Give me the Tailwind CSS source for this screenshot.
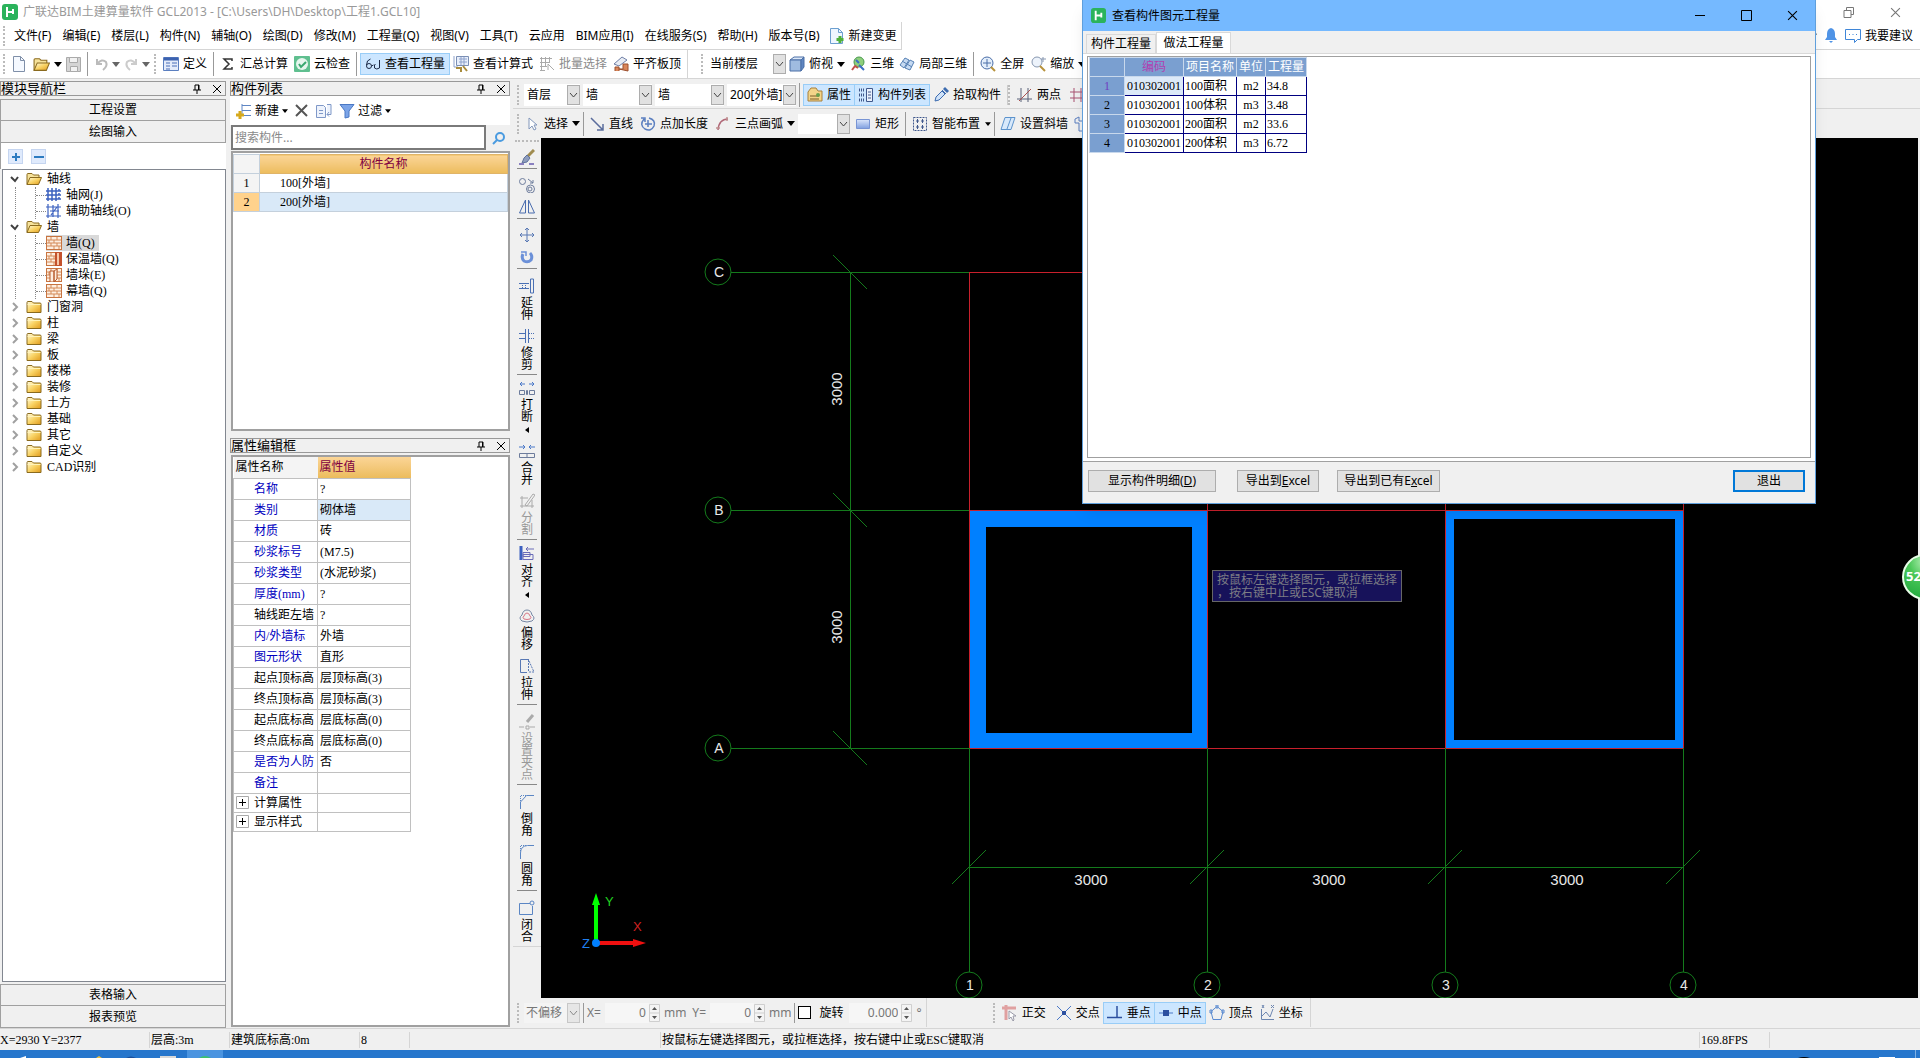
<!DOCTYPE html>
<html lang="zh-CN">
<head>
    <meta charset="UTF-8">
    <meta name="viewport" content="width=device-width, initial-scale=1.0">
    <title>广联达BIM土建算量软件 GCL2013</title>
    <script src="https://cdn.jsdelivr.net/npm/@tailwindcss/browser@4"></script>
</head>
<body class="bg-[#f0f0f0] text-black text-xs font-['Noto_Sans','Noto_Sans_CJK_SC',sans-serif]">

<!-- Shared icons -->
<svg class="absolute size-0">
    <defs>
        <linearGradient id="gold" x1="0" y1="0" x2="1" y2="1"><stop offset="0" stop-color="#fffbe0"/><stop offset=".5" stop-color="#f9d364"/><stop offset="1" stop-color="#e09a1c"/></linearGradient>
        <linearGradient id="blueFill" x1="0" y1="0" x2="0" y2="1"><stop offset="0" stop-color="#dbe6fb"/><stop offset="1" stop-color="#7f9fe0"/></linearGradient>
        <radialGradient id="ball" cx=".5" cy=".15" r=".9"><stop offset="0" stop-color="#b6f0b6"/><stop offset=".4" stop-color="#4cc95a"/><stop offset="1" stop-color="#1fa83c"/></radialGradient>
        <symbol id="logo" viewBox="0 0 16 16"><rect width="16" height="16" rx="3" fill="#2bb35c"/><path d="M5 3v10M5 8h6M11 5v5" stroke="#fff" stroke-width="2" fill="none"/></symbol>
        <symbol id="folder" viewBox="0 0 16 14"><path d="M1 12.500V2.500q0-1 1-1h4l1.500 1.500H14q1 0 1 1v8.500z" fill="url(#gold)" stroke="#8a6a1e"/><path d="M1.500 4.500h13" stroke="#fff3b8"/></symbol>
        <symbol id="folderOpen" viewBox="0 0 16 14"><path d="M1 12.500V2.500q0-1 1-1h4l1.500 1.500H13v3" fill="#f6e29a" stroke="#8a6a1e"/><path d="M1 12.500l3-7h11.500l-3 7z" fill="url(#gold)" stroke="#8a6a1e"/></symbol>
        <symbol id="wall" viewBox="0 0 16 14"><rect x=".5" y=".5" width="15" height="13" fill="#fdeee0" stroke="#c87440"/><path d="M1 4h14M1 7h14M1 10h14M5 1v3M11 1v3M8 4v3M3 4v3M5 7v3M11 7v3M8 10v3M13 10v3" stroke="#d48a58"/></symbol>
        <symbol id="down" viewBox="0 0 8 5"><path d="M0 0h8L4 5z" fill="currentColor"/></symbol>
        <symbol id="chevron" viewBox="0 0 13 20"><rect x=".5" y=".5" width="12" height="19" fill="#e1e1e1" stroke="#adadad"/><path d="M3 8l3.500 4L10 8" fill="none" stroke="#444"/></symbol>
        <symbol id="pin" viewBox="0 0 10 10"><path d="M3 1v5M7 1v5M3 1h4M1 6h8M5 6v4" stroke="#000" fill="none"/><path d="M6 1h1v5H6z"/></symbol>
        <symbol id="cross" viewBox="0 0 10 10"><path d="M1 1l8 8M9 1l-8 8" stroke="currentColor" fill="none"/></symbol>
        <symbol id="spin" viewBox="0 0 11 18"><path d="M.5.500h10v17H.5zM1 9h9" fill="#f4f4f4" stroke="#cfcfcf"/><path d="M3 6h5L5.500 3zM3 12h5l-2.500 3z" fill="#555"/></symbol>
    </defs>
</svg>

<div class="relative flex h-screen flex-col overflow-hidden">

    <!-- Title, menu and main toolbar -->
    <header class="bg-white">
        <div class="flex h-[22px] items-center gap-[5px] pl-[2px] pt-[2px] text-[#999]">
            <svg class="size-4"><use href="#logo"/></svg>
            <span>广联达BIM土建算量软件 GCL2013 - [C:\Users\DH\Desktop\工程1.GCL10]</span>
            <div class="ml-auto flex gap-[36px] pr-[19px]">
                <button aria-label="还原"><svg class="size-[11px]" fill="none" stroke="#777"><path d="M1 3.500h7v7H1zM3.500 3V.5h7v7H8"/></svg></button>
                <button aria-label="关闭"><svg class="size-[11px] text-[#777]"><use href="#cross"/></svg></button>
            </div>
        </div>
        <div class="flex h-[28px] justify-between">
            <nav class="flex items-center gap-[11px] border-r border-b border-[#d5d5d5] pr-1">
                <span class="ml-[3px] h-5 border-l-2 border-dotted border-[#bbb] -mr-[2px]"></span>
                <button>文件(F)</button>
                <button>编辑(E)</button>
                <button>楼层(L)</button>
                <button>构件(N)</button>
                <button>辅轴(O)</button>
                <button>绘图(D)</button>
                <button>修改(M)</button>
                <button>工程量(Q)</button>
                <button>视图(V)</button>
                <button>工具(T)</button>
                <button>云应用</button>
                <button>BIM应用(I)</button>
                <button>在线服务(S)</button>
                <button>帮助(H)</button>
                <button>版本号(B)</button>
                <button class="-ml-[2px] flex items-center gap-1">
                    <svg class="size-4" fill="none"><path d="M1.500.500h8l4 4v11h-12z" fill="#eef6ff" stroke="#6c9fd0"/><path d="M9.500.500v4h4" stroke="#6c9fd0"/><path d="M11 8v7M7.500 11.500h7" stroke="#4fb03c" stroke-width="3"/></svg>
                    新建变更
                </button>
            </nav>
            <div class="flex items-center gap-[8px] border-b border-[#d5d5d5] pr-[7px]">
                <svg class="h-[5px] w-[6px]"><use href="#down"/></svg>
                <button aria-label="消息"><svg class="h-[15px] w-[12px]" fill="#4f93e6"><path d="M6 0q4 1 4 6v3l2 3H0l2-3V6q0-5 4-6zM4 13h4l-2 2z"/></svg></button>
                <button class="flex items-center gap-1">
                    <svg class="size-4" fill="none" stroke="#3f86d8"><path d="M.5 1.500h15v10h-3l-3 3v-3h-9z"/><path d="M4 6.500h1M7.500 6.500h1M11 6.500h1"/></svg>
                    我要建议
                </button>
            </div>
        </div>
        <div class="flex h-[29px] items-center border-b border-[#d5d5d5]">
            <span class="ml-[3px] h-5 border-l-2 border-dotted border-[#bbb]"></span>
            <button class="ml-[6px]" aria-label="新建"><svg class="size-4" fill="none" stroke="#7f8fa8"><path d="M2.500.500h7l4 4v11h-11z" fill="#f5f9ff"/><path d="M9.500.500v4h4"/></svg></button>
            <button class="ml-[6px] flex items-center gap-1" aria-label="打开"><svg class="h-[15px] w-[17px]"><use href="#folderOpen"/></svg><svg class="h-[5px] w-2"><use href="#down"/></svg></button>
            <button class="ml-1" aria-label="保存"><svg class="size-[15px]" fill="#d5d5d5" stroke="#aaa"><path d="M.5.500h14v14H.5z"/><path d="M3.500.500h8v5h-8zM4.500 9.500h7v5h-7z" fill="#f2f2f2"/></svg></button>
            <span class="mx-[6px] h-6 w-px bg-[#999]"></span>
            <button class="flex items-center gap-[2px] text-[#666]" aria-label="撤销"><svg class="size-4" fill="none" stroke="#bbb" stroke-width="2"><path d="M3 3v5h5M3 8q5-6 9-2 2 4-3 8"/></svg><svg class="h-[5px] w-2"><use href="#down"/></svg></button>
            <button class="ml-1 flex items-center gap-[2px] text-[#666]" aria-label="重做"><svg class="size-4" fill="none" stroke="#ccc" stroke-width="2"><path d="M12 3v5H7M12 8Q7 2 3 6q-2 4 3 8"/></svg><svg class="h-[5px] w-2"><use href="#down"/></svg></button>
            <span class="ml-1 h-5 border-l-2 border-dotted border-[#bbb]"></span>
            <button class="ml-1 flex items-center gap-1 px-[3px]"><svg class="size-4" fill="none"><path d="M.5 1.500h15v13H.5z" fill="#e3ebfa" stroke="#5b7fc0"/><path d="M1 3h14" stroke="#3c62b0" stroke-width="3"/><path d="M3 7h4M3 10h4M9 7h5M9 10h5M3 13h4" stroke="#4a6fb8"/></svg>定义</button>
            <span class="mx-[3px] h-6 w-px bg-[#999]"></span>
            <button class="flex items-center gap-1 px-[3px]"><svg class="size-4" fill="none" stroke="#333" stroke-width="1.500"><path d="M12 5V3H4l5 5-5 5h8v-2"/></svg>汇总计算</button>
            <button class="flex items-center gap-1 px-[3px]"><svg class="size-4"><rect width="16" height="16" rx="1" fill="#5fbf8f"/><circle cx="8" cy="8" r="6" fill="#e6f6ee"/><path d="M5 8l2 3 5-5" fill="none" stroke="#3aa870" stroke-width="2"/></svg>云检查</button>
            <span class="mx-[3px] h-6 w-px bg-[#999]"></span>
            <button class="flex h-[22px] items-center gap-1 border border-[#99cdf7] bg-[#cce6ff] px-1"><svg class="size-4" fill="none" stroke="#1d2b48"><circle cx="4" cy="10" r="2.500"/><path d="M1.500 9q0-5 4-6M9.500 9v3q2 2 5 0V4M9.500 9l1-1M6.500 10l2-1"/></svg>查看工程量</button>
            <button class="flex items-center gap-1 px-[3px]"><svg class="size-4" fill="none"><path d="M3.500.500h12v9h-12z" fill="#e8effb" stroke="#7b8fb5"/><path d="M1 0v11h4M6 3h8M6 6h8M8 1v8M11 1v8" stroke="#8ea2cc"/><path d="M3 12h5v4M10 10l4 5" stroke="#a98c3c" stroke-width="2"/></svg>查看计算式</button>
            <button class="flex items-center gap-1 px-[3px] text-[#8a8a8a]" disabled><svg class="size-4" fill="none" stroke="#aaa"><path d="M1 2.500h12M1 6.500h9M1 10.500h7M1 14.500h5M2.500 1v14M6.500 1v10M10.500 1v6M9 8l6 6M9 8v6"/></svg>批量选择</button>
            <button class="flex items-center gap-1 px-[3px]"><svg class="size-4" fill="none"><path d="M1 8l8-7 5 3-8 6z" fill="#e8ecf4" stroke="#6f7fa6"/><path d="M2 15v-4h4v4M6 13h4V8h5v7z" fill="#d9865a" stroke="#9c4e2c"/></svg>平齐板顶</button>
            <span class="ml-[3px] h-full w-px bg-[#d5d5d5]"></span>
            <span class="ml-[13px] h-5 border-l-2 border-dotted border-[#bbb]"></span>
            <label class="ml-[7px] flex items-center">
                <select class="h-5 w-[63px] appearance-none bg-white" aria-label="楼层范围"><option>当前楼层</option></select>
                <svg class="h-5 w-[13px]"><use href="#chevron"/></svg>
            </label>
            <button class="flex items-center gap-1 px-[3px]"><svg class="size-4" fill="#9fbbe0" stroke="#4a6fa6"><path d="M1 4l4-3h10l-3 3z" fill="#dce8f8"/><path d="M1 4h11v11H1z"/><path d="M12 4l3-3v10l-3 4z" fill="#5f86c0"/></svg>俯视<svg class="h-[5px] w-2"><use href="#down"/></svg></button>
            <button class="flex items-center gap-1 px-[2px]"><svg class="size-4" fill="none"><circle cx="9" cy="6" r="5" fill="#8fcf7c" stroke="#4a9a50"/><path d="M2 14l3-4 3 2" stroke="#c0504a" stroke-width="2"/><path d="M6 4l3 3M9 9l5 5" stroke="#3d6fc4" stroke-width="2"/></svg>三维</button>
            <button class="flex items-center gap-1 px-[3px]"><svg class="size-4" fill="#c6daf2" stroke="#5580b4"><path d="M1 9l5-7 4 2-5 8zM6 12l5-8 4 2-4 8zM3 5l10 6"/></svg>局部三维</button>
            <span class="mx-[3px] h-6 w-px bg-[#999]"></span>
            <button class="flex items-center gap-1 px-[3px]"><svg class="size-4" fill="none" stroke="#4a6ea8"><circle cx="7" cy="7" r="6" fill="#e3eefb"/><path d="M7 3v8M3 7h8"/><path d="M11 11l4 4" stroke="#b8923c" stroke-width="2"/></svg>全屏</button>
            <button class="flex items-center gap-1 px-[3px]"><svg class="size-4" fill="none" stroke="#8797b0"><circle cx="7" cy="6" r="5" fill="#edf3fb"/><path d="M11 3h5M13 1v5"/><path d="M10 10l5 5" stroke="#b8923c" stroke-width="2"/></svg>缩放<svg class="h-[5px] w-2"><use href="#down"/></svg></button>
        </div>
    </header>

    <main class="flex min-h-0 flex-1 pt-[2px]">

        <!-- Module navigation -->
        <aside class="flex w-[226px] flex-col">
            <h2 class="flex h-[15px] items-center gap-[10px] border border-[#999] bg-[#f0f0f0] pr-[3px] text-[13px]">模块导航栏<svg class="ml-auto size-[10px]"><use href="#pin"/></svg><svg class="size-[10px]"><use href="#cross"/></svg></h2>
            <button class="mt-[3px] h-[22px] border border-[#a0a0a0] bg-[#f0f0f0]">工程设置</button>
            <button class="h-[22px] border border-t-0 border-[#a0a0a0] bg-[#f0f0f0]">绘图输入</button>
            <div class="flex h-[26px] items-center gap-2 border-l border-[#a0a0a0] bg-white pl-[7px]">
                <button class="border border-[#c5d5f0] bg-[#dfeafc]" aria-label="展开"><svg class="size-[13px]" stroke="#2c7bc0" stroke-width="2"><path d="M7 3v8M3 7h8"/></svg></button>
                <button class="border border-[#c5d5f0] bg-[#dfeafc]" aria-label="折叠"><svg class="size-[13px]" stroke="#2c7bc0" stroke-width="2"><path d="M2 7h10"/></svg></button>
            </div>
            <ul class="ml-[2px] min-h-0 flex-1 border border-[#828790] bg-white pt-px font-['Liberation_Serif','Noto_Sans_CJK_SC',serif]">
                <li>
                    <div class="flex h-4 items-center pl-[7px]"><svg class="mr-[7px] h-2 w-[9px]" fill="none" stroke="#404040" stroke-width="2"><path d="M1 2l4 4 3-4"/></svg><svg class="mr-[5px] h-[14px] w-4"><use href="#folderOpen"/></svg>轴线</div>
                    <ul class="ml-3 border-l border-dotted border-[#888]"><li class="ml-[19px] border-l border-dotted border-[#888]">
                        <div class="flex h-4 items-center"><span class="w-[10px] border-t border-dotted border-[#888]"></span><svg class="mr-1 h-[14px] w-4" stroke="#3c62c0" stroke-width="1.500"><path d="M2 0v13M6 0v13M10 0v13M0 3h15M0 7h15M0 11h15"/><path d="M13 1v12" stroke-dasharray="2 2"/></svg>轴网(J)</div>
                        <div class="flex h-4 items-center"><span class="w-[10px] border-t border-dotted border-[#888]"></span><svg class="mr-1 h-[14px] w-4" fill="none" stroke="#3c62c0"><path d="M2 0v14M12 0v14M0 3h15M0 12h15M5 11l6-8M7 1v12M4 7h9" stroke-width="1.200"/></svg>辅助轴线(O)</div>
                    </li></ul>
                </li>
                <li>
                    <div class="flex h-4 items-center pl-[7px]"><svg class="mr-[7px] h-2 w-[9px]" fill="none" stroke="#404040" stroke-width="2"><path d="M1 2l4 4 3-4"/></svg><svg class="mr-[5px] h-[14px] w-4"><use href="#folderOpen"/></svg>墙</div>
                    <ul class="ml-3 border-l border-dotted border-[#888]"><li class="ml-[19px] border-l border-dotted border-[#888]">
                        <div class="flex h-4 items-center"><span class="w-[10px] border-t border-dotted border-[#888]"></span><span class="flex h-4 items-center bg-[#d9d9d9] pr-1"><svg class="mr-1 h-[14px] w-4"><use href="#wall"/></svg>墙(Q)</span></div>
                        <div class="flex h-4 items-center"><span class="w-[10px] border-t border-dotted border-[#888]"></span><svg class="mr-1 h-[14px] w-4"><use href="#wall"/><path d="M9 0h7v14H9z" fill="#c4522c"/><path d="M12 1v12" stroke="#f6c7a8" stroke-width="2"/></svg>保温墙(Q)</div>
                        <div class="flex h-4 items-center"><span class="w-[10px] border-t border-dotted border-[#888]"></span><svg class="mr-1 h-[14px] w-4"><use href="#wall"/><path d="M4 3h4v11H4zM8 3l3-2v10l-3 3z" fill="#fdeee0" stroke="#b85a2c"/></svg>墙垛(E)</div>
                        <div class="flex h-4 items-center"><span class="w-[10px] border-t border-dotted border-[#888]"></span><svg class="mr-1 h-[14px] w-4"><use href="#wall"/></svg>幕墙(Q)</div>
                    </li></ul>
                </li>
                <li class="flex h-4 items-center pl-[7px]"><svg class="mr-[7px] h-[10px] w-[9px]" fill="none" stroke="#a0a0a0" stroke-width="2"><path d="M3 1l4 4-4 4"/></svg><svg class="mr-[5px] h-[14px] w-4"><use href="#folder"/></svg>门窗洞</li>
                <li class="flex h-4 items-center pl-[7px]"><svg class="mr-[7px] h-[10px] w-[9px]" fill="none" stroke="#a0a0a0" stroke-width="2"><path d="M3 1l4 4-4 4"/></svg><svg class="mr-[5px] h-[14px] w-4"><use href="#folder"/></svg>柱</li>
                <li class="flex h-4 items-center pl-[7px]"><svg class="mr-[7px] h-[10px] w-[9px]" fill="none" stroke="#a0a0a0" stroke-width="2"><path d="M3 1l4 4-4 4"/></svg><svg class="mr-[5px] h-[14px] w-4"><use href="#folder"/></svg>梁</li>
                <li class="flex h-4 items-center pl-[7px]"><svg class="mr-[7px] h-[10px] w-[9px]" fill="none" stroke="#a0a0a0" stroke-width="2"><path d="M3 1l4 4-4 4"/></svg><svg class="mr-[5px] h-[14px] w-4"><use href="#folder"/></svg>板</li>
                <li class="flex h-4 items-center pl-[7px]"><svg class="mr-[7px] h-[10px] w-[9px]" fill="none" stroke="#a0a0a0" stroke-width="2"><path d="M3 1l4 4-4 4"/></svg><svg class="mr-[5px] h-[14px] w-4"><use href="#folder"/></svg>楼梯</li>
                <li class="flex h-4 items-center pl-[7px]"><svg class="mr-[7px] h-[10px] w-[9px]" fill="none" stroke="#a0a0a0" stroke-width="2"><path d="M3 1l4 4-4 4"/></svg><svg class="mr-[5px] h-[14px] w-4"><use href="#folder"/></svg>装修</li>
                <li class="flex h-4 items-center pl-[7px]"><svg class="mr-[7px] h-[10px] w-[9px]" fill="none" stroke="#a0a0a0" stroke-width="2"><path d="M3 1l4 4-4 4"/></svg><svg class="mr-[5px] h-[14px] w-4"><use href="#folder"/></svg>土方</li>
                <li class="flex h-4 items-center pl-[7px]"><svg class="mr-[7px] h-[10px] w-[9px]" fill="none" stroke="#a0a0a0" stroke-width="2"><path d="M3 1l4 4-4 4"/></svg><svg class="mr-[5px] h-[14px] w-4"><use href="#folder"/></svg>基础</li>
                <li class="flex h-4 items-center pl-[7px]"><svg class="mr-[7px] h-[10px] w-[9px]" fill="none" stroke="#a0a0a0" stroke-width="2"><path d="M3 1l4 4-4 4"/></svg><svg class="mr-[5px] h-[14px] w-4"><use href="#folder"/></svg>其它</li>
                <li class="flex h-4 items-center pl-[7px]"><svg class="mr-[7px] h-[10px] w-[9px]" fill="none" stroke="#a0a0a0" stroke-width="2"><path d="M3 1l4 4-4 4"/></svg><svg class="mr-[5px] h-[14px] w-4"><use href="#folder"/></svg>自定义</li>
                <li class="flex h-4 items-center pl-[7px]"><svg class="mr-[7px] h-[10px] w-[9px]" fill="none" stroke="#a0a0a0" stroke-width="2"><path d="M3 1l4 4-4 4"/></svg><svg class="mr-[5px] h-[14px] w-4"><use href="#folder"/></svg>CAD识别</li>
            </ul>
            <button class="mt-[2px] h-[22px] border border-[#a0a0a0] bg-[#f0f0f0]">表格输入</button>
            <button class="h-[22px] border border-t-0 border-[#a0a0a0] bg-[#f0f0f0]">报表预览</button>
        </aside>

        <!-- Component list and properties -->
        <aside class="ml-1 flex w-[280px] flex-col">
            <h2 class="flex h-[15px] items-center gap-[10px] border border-[#999] bg-[#f0f0f0] pr-[3px] text-[13px]">构件列表<svg class="ml-auto size-[10px]"><use href="#pin"/></svg><svg class="size-[10px]"><use href="#cross"/></svg></h2>
            <div class="flex h-[29px] items-center gap-[7px] bg-white px-[6px]">
                <button class="flex items-center gap-[3px]"><svg class="size-4" fill="none"><path d="M6 1v12M6 2.500h9M6 7.500h9M6 12.500h9" stroke="#5f86c4"/><path d="M4 8v8M0 12h8" stroke="#d6a91c" stroke-width="3"/></svg>新建<svg class="h-1 w-[6px]"><use href="#down"/></svg></button>
                <button aria-label="删除"><svg class="size-[13px]" stroke="#555" stroke-width="2"><path d="M1 1l11 11M12 1L1 12"/></svg></button>
                <button class="ml-px" aria-label="复制"><svg class="size-4" fill="#eef3fc" stroke="#7f98c8"><path d="M.5 2.500h7l2 2v10h-9zM3 7.500h4M3 10.500h4M11 1.500h4v10h-4M13 9l-2 2.500 2 2"/></svg></button>
                <button class="flex items-center gap-[3px]"><svg class="size-4" fill="#7ba4e8" stroke="#4a78c4"><path d="M1 1.500h14L10 8v6l-4 1V8z"/></svg>过滤<svg class="h-1 w-[6px]"><use href="#down"/></svg></button>
            </div>
            <div class="flex h-[25px] items-center gap-[6px]">
                <input class="ml-px h-[25px] w-[255px] border-2 border-[#7a7a7a] bg-white px-[2px] text-xs placeholder:text-[#8a8a8a]" type="text" placeholder="搜索构件..." aria-label="搜索构件">
                <button aria-label="搜索"><svg class="size-[14px]" fill="none" stroke="#4a9be0" stroke-width="2"><circle cx="8" cy="6" r="4"/><path d="M5 9l-4 4"/></svg></button>
            </div>
            <div class="mt-px ml-px h-[280px] border-2 border-[#a0a0a0] bg-white pt-px">
                <table class="w-full table-fixed border-collapse font-['Liberation_Serif','Noto_Sans_CJK_SC',serif]">
                    <tr class="h-[19px]"><th class="w-[26px] border border-[#c4d0dc] bg-[#f4f4f4]"></th><th class="border border-[#e0b468] bg-linear-to-b from-[#fbd596] to-[#ecbc5c] font-normal text-[#800040]">构件名称</th></tr>
                    <tr class="h-[19px]"><td class="border border-[#c4d0dc] bg-[#f4f4f4] text-center">1</td><td class="border border-[#c4d0dc] pl-[20px]">100[外墙]</td></tr>
                    <tr class="h-[19px]"><td class="border border-[#c4d0dc] bg-[#ffd28c] text-center">2</td><td class="border border-[#c4d0dc] bg-[#d9e9f8] pl-[20px]">200[外墙]</td></tr>
                </table>
            </div>
            <h2 class="mt-[7px] flex h-[15px] items-center gap-[10px] border border-[#999] bg-[#f0f0f0] pr-[3px] text-[13px]">属性编辑框<svg class="ml-auto size-[10px]"><use href="#pin"/></svg><svg class="size-[10px]"><use href="#cross"/></svg></h2>
            <div class="mt-[2px] mb-px ml-px min-h-0 flex-1 border-2 border-[#a0a0a0] bg-white">
                <table class="w-[178px] table-fixed border-collapse whitespace-nowrap font-['Liberation_Serif','Noto_Sans_CJK_SC',serif] [&_td]:border [&_td]:border-[#c0c0c0] [&_td]:pl-[2px] [&_th]:pl-[2px] [&_th]:text-left [&_th]:font-normal [&_tr]:h-[21px]">
                    <tr><th class="w-[84px] bg-[#f4f4f4]">属性名称</th><th class="bg-linear-to-b from-[#fbd596] to-[#ecbc5c] text-[#800040]">属性值</th></tr>
                    <tr><td class="text-[#0000c0]"><span class="pl-[18px]">名称</span></td><td>?</td></tr>
                    <tr><td class="text-[#0000c0]"><span class="pl-[18px]">类别</span></td><td class="bg-[#d9e9f8]">砌体墙</td></tr>
                    <tr><td class="text-[#0000c0]"><span class="pl-[18px]">材质</span></td><td>砖</td></tr>
                    <tr><td class="text-[#0000c0]"><span class="pl-[18px]">砂浆标号</span></td><td>(M7.5)</td></tr>
                    <tr><td class="text-[#0000c0]"><span class="pl-[18px]">砂浆类型</span></td><td>(水泥砂浆)</td></tr>
                    <tr><td class="text-[#0000c0]"><span class="pl-[18px]">厚度(mm)</span></td><td>?</td></tr>
                    <tr><td><span class="pl-[18px]">轴线距左墙</span></td><td>?</td></tr>
                    <tr><td class="text-[#0000c0]"><span class="pl-[18px]">内/外墙标</span></td><td>外墙</td></tr>
                    <tr><td class="text-[#0000c0]"><span class="pl-[18px]">图元形状</span></td><td>直形</td></tr>
                    <tr><td><span class="pl-[18px]">起点顶标高</span></td><td>层顶标高(3)</td></tr>
                    <tr><td><span class="pl-[18px]">终点顶标高</span></td><td>层顶标高(3)</td></tr>
                    <tr><td><span class="pl-[18px]">起点底标高</span></td><td>层底标高(0)</td></tr>
                    <tr><td><span class="pl-[18px]">终点底标高</span></td><td>层底标高(0)</td></tr>
                    <tr><td class="text-[#0000c0]"><span class="pl-[18px]">是否为人防</span></td><td>否</td></tr>
                    <tr><td class="text-[#0000c0]"><span class="pl-[18px]">备注</span></td><td></td></tr>
                    <tr class="h-[19px]!"><td><span class="flex items-center gap-[5px]"><svg class="size-[13px]" fill="none"><path d="M.5.500h12v12H.5z" stroke="#aaa"/><path d="M3 6.500h7M6.500 3v7" stroke="#000"/></svg>计算属性</span></td><td></td></tr>
                    <tr class="h-[19px]!"><td><span class="flex items-center gap-[5px]"><svg class="size-[13px]" fill="none"><path d="M.5.500h12v12H.5z" stroke="#aaa"/><path d="M3 6.500h7M6.500 3v7" stroke="#000"/></svg>显示样式</span></td><td></td></tr>
                </table>
            </div>
        </aside>

        <!-- Drawing area -->
        <section class="ml-[3px] flex min-w-0 flex-1 flex-col">
            <div class="flex h-7 items-center overflow-hidden whitespace-nowrap border-b border-[#d5d5d5]">
                <span class="ml-[4px] h-5 border-l-2 border-dotted border-[#bbb]"></span>
                <label class="ml-[5px] flex"><select class="h-[22px] w-[43px] appearance-none bg-white px-[3px]" aria-label="楼层"><option>首层</option></select><svg class="h-[22px] w-[13px] bg-white"><use href="#chevron"/></svg></label>
                <label class="ml-[3px] flex"><select class="h-[22px] w-[56px] appearance-none bg-white px-[3px]" aria-label="构件类型"><option>墙</option></select><svg class="h-[22px] w-[13px] bg-white"><use href="#chevron"/></svg></label>
                <label class="ml-[3px] flex"><select class="h-[22px] w-[56px] appearance-none bg-white px-[3px]" aria-label="构件"><option>墙</option></select><svg class="h-[22px] w-[13px] bg-white"><use href="#chevron"/></svg></label>
                <label class="ml-[3px] flex"><select class="h-[22px] w-[56px] appearance-none bg-white pl-[3px]" aria-label="构件名称"><option>200[外墙]</option></select><svg class="h-[22px] w-[13px] bg-white"><use href="#chevron"/></svg></label>
                <span class="mx-[3px] h-6 w-px bg-[#999]"></span>
                <button class="flex h-[22px] items-center gap-1 border border-[#99cdf7] bg-[#cce6ff] px-[3px]"><svg class="size-4"><path d="M1 5l3-4h5l2 3h4v10H1z" fill="#f3d489" stroke="#a8803c"/><path d="M3 9h9M3 12h9" stroke="#7a5c28"/><circle cx="11" cy="8" r="2" fill="#68a04c"/></svg>属性</button>
                <button class="flex h-[22px] items-center gap-1 border border-l-0 border-[#99cdf7] bg-[#cce6ff] px-[3px]"><svg class="size-4" fill="none" stroke="#40588c"><path d="M1 3h5M1 8h5M1 13h5" stroke-dasharray="1 1" stroke-width="3"/><path d="M8.500 1.500h6v13h-6z" fill="#eaf1fc"/><path d="M10 5h3M10 8h3M10 11h3"/></svg>构件列表</button>
                <button class="flex items-center gap-1 px-[3px]"><svg class="size-4"><path d="M9 3l4 4M2 14l1-4 6-6 3 3-6 6z" fill="#cfe2f8" stroke="#3d6cb0"/><path d="M10 2l2-2 4 4-2 2z" fill="#3d6cb0"/></svg>拾取构件</button>
                <span class="ml-[3px] h-5 w-px bg-[#ccc]"></span><span class="h-5 border-l-2 border-dotted border-[#bbb]"></span>
                <button class="flex items-center gap-1 px-[7px]"><svg class="size-4" fill="none" stroke="#586078"><path d="M4 1v14M11 1v14M0 12h15"/><path d="M2 14L14 2" stroke="#a85050"/></svg>两点</button>
                <button class="px-[2px]" aria-label="平行"><svg class="size-4" stroke="#a85070"><path d="M4 1v14M11 1v14M0 5h15M0 11h15"/></svg></button>
            </div>
            <div class="flex h-[29px] items-center overflow-hidden whitespace-nowrap">
                <span class="ml-[4px] h-5 border-l-2 border-dotted border-[#bbb]"></span>
                <button class="ml-[2px] flex items-center gap-1 px-[3px]"><svg class="size-4" fill="#fff" stroke="#8297bb"><path d="M5 2v11l3-3 2 4 2-1-2-4h3z"/></svg>选择<svg class="h-[5px] w-2"><use href="#down"/></svg></button>
                <span class="mr-[2px] h-6 w-px bg-[#999]"></span>
                <button class="flex items-center gap-1 px-[3px]"><svg class="size-4" fill="none" stroke="#5a6c9c" stroke-width="1.500"><path d="M2 2l12 12M14 8v6H8"/></svg>直线</button>
                <button class="flex items-center gap-1 px-[4px]"><svg class="size-4" fill="none" stroke="#5b7fc0" stroke-width="1.500"><path d="M4 3q-5 6 1 10 6 3 9-3 2-6-5-8M8 4v7M5 8h7M1 2h4v4"/></svg>点加长度</button>
                <button class="flex items-center gap-1 px-[3px]"><svg class="size-4" fill="none" stroke="#b06878" stroke-width="1.500"><path d="M3 14Q4 3 13 3"/><path d="M1 12h4M12 1v4" stroke="#c09090"/></svg>三点画弧<svg class="h-[5px] w-2"><use href="#down"/></svg></button>
                <label class="flex"><select class="h-[20px] w-[39px] appearance-none bg-white" aria-label="半径"><option></option></select><svg class="h-5 w-[13px]"><use href="#chevron"/></svg></label>
                <button class="ml-[2px] flex items-center gap-1 px-[3px]"><svg class="size-4"><path d="M1.500 3.500h13v9h-13z" fill="url(#blueFill)" stroke="#7894d4"/></svg>矩形</button>
                <span class="mx-[3px] h-6 w-px bg-[#999]"></span>
                <button class="flex items-center gap-1 px-[3px]"><svg class="size-4" fill="none" stroke="#40588c"><path d="M1.500 1.500h13v13h-13z" stroke-dasharray="2 1"/><path d="M4 5h3M9 5h3M4 11h3M9 11h3M5.500 3v4M10.500 3v4M5.500 9v4M10.500 9v4"/></svg>智能布置<svg class="ml-px h-1 w-[6px]"><use href="#down"/></svg></button>
                <span class="h-6 w-px bg-[#999]"></span>
                <button class="ml-[2px] flex items-center gap-1 px-[3px]"><svg class="size-4" fill="#d8e9fb" stroke="#5c93cc"><path d="M5 1.500h10l-4 12H1z"/><path d="M11 2L7 13"/></svg>设置斜墙</button>
                <button class="px-[3px]" aria-label="墙"><svg class="size-4" fill="none" stroke="#5b7fc0"><path d="M1 3l4-2v4h8v10H5V7H1z"/></svg></button>
            </div>

            <div class="flex min-h-0 flex-1 pr-[2px]">
                <!-- Vertical edit toolbar -->
                <div class="flex w-[28px] shrink-0 flex-col items-center [&_svg]:shrink-0">
                    <span class="mt-[2px] mb-1 w-6 border-t-2 border-dotted border-[#bbb]"></span>
                    <button class="h-[22px]" aria-label="格式刷"><svg class="size-4"><path d="M15 1L8 8" stroke="#a08c50" stroke-width="3"/><path d="M8 6l3 3-3 4-5 1 2-5z" fill="#8f9dbd" stroke="#5f729c"/><path d="M0 15h5M10 15h5" stroke="#8a80c0" stroke-width="2"/></svg></button>
                    <span class="mb-[5px] h-px w-5 shrink-0 bg-[#888]"></span>
                    <button class="h-[22px]" aria-label="复制"><svg class="size-4" fill="none" stroke="#6d7c9c"><circle cx="3.500" cy="4.500" r="3"/><circle cx="11.500" cy="12" r="4"/><circle cx="11" cy="12" r="2"/><path d="M9 2l5 4M14 3v3h-3"/></svg></button>
                    <button class="h-[22px]" aria-label="镜像"><svg class="size-4" fill="none" stroke="#4a6cae"><path d="M6.500 1v13h-6zM9.500 1v13h6z"/></svg></button>
                    <span class="mb-[5px] h-px w-5 shrink-0 bg-[#888]"></span>
                    <button class="h-[22px]" aria-label="移动"><svg class="size-4" fill="none" stroke="#5878b4"><path d="M8 1v14M1 8h14M6 3l2-2 2 2M6 13l2 2 2-2M3 6L1 8l2 2M13 6l2 2-2 2"/></svg></button>
                    <button class="h-[22px]" aria-label="旋转"><svg class="size-4" fill="none" stroke="#6b90d8" stroke-width="3"><path d="M4 5q-2 4 1 7 4 2 7-1 2-4-1-7"/><path d="M2 3h5v4" stroke-width="1.500"/></svg></button>
                    <span class="mb-[5px] h-px w-5 shrink-0 bg-[#888]"></span>
                    <button class="h-[50px] w-4 leading-[12px]"><svg class="mb-[3px] size-4" fill="none" stroke="#4a70b4"><path d="M11.500 1v14h3V1zM0 5.500h10M0 10.500h10" /><path d="M6.500 5v6M3.500 5v6" stroke-dasharray="1 1"/></svg>延伸</button>
                    <button class="h-[50px] w-4 leading-[12px]"><svg class="mb-[3px] size-4" fill="none" stroke="#4a70b4"><path d="M6.500 1v14M9.500 1v14M0 5.500h6M0 10.500h6"/><path d="M10 5.500h6M10 10.500h6" stroke-dasharray="1 1"/></svg>修剪</button>
                    <span class="mb-[5px] h-px w-5 shrink-0 bg-[#888]"></span>
                    <button class="flex h-[59px] w-4 flex-col items-center leading-[12px]"><svg class="mb-[3px] size-4" fill="none" stroke="#4a78c8"><path d="M1 4h5M10 4h5M3 2L1 4l2 2M13 2l2 2-2 2"/><path d="M.5 10.500h5v4h-5zM10.500 10.500h5v4h-5zM7.500 10.500h1v4h-1z" stroke="#6d7c9c"/></svg>打断<svg class="mt-1 h-[6px] w-1"><path d="M4 0v6L0 3z"/></svg></button>
                    <button class="h-[50px] w-4 leading-[12px]"><svg class="mb-[3px] size-4" fill="none" stroke="#4a78c8"><path d="M0 4h6M10 4h6M4 2l2 2-2 2M12 2l-2 2 2 2"/><path d="M.5 10.500h15v4H.5zM8 10v4" stroke="#6d7c9c"/></svg>合并</button>
                    <button class="h-[50px] w-4 leading-[12px] text-[#999]" disabled><svg class="mb-[3px] size-4" fill="none" stroke="#aaa"><path d="M1 5h8M1 13h14M3 3v12M13 7v8M6 12l8-11 2 1-8 11z"/></svg>分割</button>
                    <span class="mb-[5px] h-px w-5 shrink-0 bg-[#888]"></span>
                    <button class="flex h-[59px] w-4 flex-col items-center leading-[12px]"><svg class="mb-[3px] size-4" fill="none" stroke="#6a6cb8"><path d="M2 1v14" stroke="#3c60c0" stroke-width="3"/><path d="M7 4h8M9 2L7 4l2 2M4 7.500h7v4H4zM4 9.500h10v5H4z"/></svg>对齐<svg class="mt-1 h-[6px] w-1"><path d="M4 0v6L0 3z"/></svg></button>
                    <button class="h-[50px] w-4 leading-[12px]"><svg class="mb-[3px] size-4" fill="none"><path d="M3 13q-4-3 0-6 1-5 5-5t5 5q4 3 0 6-5 2-10 0z" stroke="#7686a4"/><path d="M5 11q-2-2 0-3 1-3 3-3t3 3q2 1 0 3-3 1-6 0z" stroke="#d87888"/></svg>偏移</button>
                    <button class="h-[50px] w-4 leading-[12px]"><svg class="mb-[3px] size-4" fill="none" stroke="#5878b4"><path d="M10 1.500H1.500v13H8"/><path d="M9.500 2v12M10 3l5 11H9" stroke-dasharray="2 1"/></svg>拉伸</button>
                    <span class="mb-[5px] h-px w-5 shrink-0 bg-[#888]"></span>
                    <button class="h-[74px] w-4 leading-[12px] text-[#999]" disabled><svg class="mb-[3px] size-4" fill="none" stroke="#aaa"><path d="M0 13h5M11 13h5M7 12h3v3H7z"/><path d="M14 1L8 8" stroke-width="3"/></svg>设置夹点</button>
                    <span class="mb-[5px] h-px w-5 shrink-0 bg-[#888]"></span>
                    <button class="h-[50px] w-4 leading-[12px]"><svg class="mb-[3px] size-4" fill="none" stroke="#5b86c4"><path d="M1.500 15V8l6-6.500H15"/><path d="M1.500 7V1.500H7" stroke-dasharray="1 1"/></svg>倒角</button>
                    <button class="h-[50px] w-4 leading-[12px]"><svg class="mb-[3px] size-4" fill="none" stroke="#5b86c4"><path d="M1.500 15V9q0-7 7-7.500H15"/><path d="M1.500 7V1.500H7" stroke-dasharray="1 1"/></svg>圆角</button>
                    <span class="mb-[5px] h-px w-5 shrink-0 bg-[#888]"></span>
                    <button class="h-[50px] w-4 leading-[12px]"><svg class="mb-[3px] size-4" fill="none" stroke="#5b86c4"><path d="M11 3.500H.5v11h13V6"/><circle cx="13" cy="3" r="2"/></svg>闭合</button>
                    <span class="h-px w-7 shrink-0 bg-[#d5d5d5]"></span>
                </div>

                <div class="relative min-w-0 flex-1 overflow-hidden bg-black">
                    <svg class="size-full font-['Liberation_Sans',sans-serif]" fill="none">
                        <!-- walls -->
                        <rect x="437" y="381" width="222" height="222" stroke="#0080ff" stroke-width="16"/>
                        <rect x="909" y="377" width="229" height="229" stroke="#0080ff" stroke-width="8"/>
                        <!-- axis grid -->
                        <path d="M428 134H1142M428 372H1142M428 610H1142M428 134V610M666 134V610M904 134V610M1142 134V610" stroke="#c8202c" shape-rendering="crispEdges"/>
                        <path d="M190 134H428M190 372H428M190 610H428M309 134V610M428 610V834M666 610V834M904 610V834M1142 610V834M428 729H1142" stroke="#147a1c" shape-rendering="crispEdges"/>
                        <path d="M292 117l34 34M292 355l34 34M292 593l34 34M411 746l34-34M649 746l34-34M887 746l34-34M1125 746l34-34" stroke="#147a1c"/>
                        <g stroke="#147a1c">
                            <circle cx="177" cy="134" r="13"/><circle cx="177" cy="372" r="13"/><circle cx="177" cy="610" r="13"/>
                            <circle cx="428" cy="847" r="13"/><circle cx="666" cy="847" r="13"/><circle cx="904" cy="847" r="13"/><circle cx="1142" cy="847" r="13"/>
                        </g>
                        <g fill="#e8e8e8" font-size="15" text-anchor="middle">
                            <g font-size="14">
                                <text x="178" y="139">C</text><text x="178" y="377">B</text><text x="178" y="615">A</text>
                                <text x="429" y="852">1</text><text x="667" y="852">2</text><text x="905" y="852">3</text><text x="1143" y="852">4</text>
                            </g>
                            <text x="550" y="747">3000</text><text x="788" y="747">3000</text><text x="1026" y="747">3000</text>
                            <text transform="translate(301 251) rotate(-90)">3000</text><text transform="translate(301 489) rotate(-90)">3000</text>
                        </g>
                        <!-- coordinate marker -->
                        <path d="M55 803V766" stroke="#00ff00" stroke-width="4"/><path d="M51 767l4-12 4 12z" fill="#00ff00"/>
                        <path d="M57 805H93" stroke="#f01010" stroke-width="4"/><path d="M92 801l13 4-13 4z" fill="#f01010"/>
                        <circle cx="55" cy="805" r="4" fill="#0080ff"/>
                        <g font-size="13"><text x="64" y="768" fill="#20d020">Y</text><text x="92" y="793" fill="#d02020">X</text><text x="41" y="810" fill="#2080f0">Z</text></g>
                    </svg>
                    <p class="absolute left-[671px] top-[432px] w-[190px] border border-[#666] bg-[#17125a] px-1 py-[2px] leading-[13px] text-[#7c7c84]">按鼠标左键选择图元，或拉框选择<br>，按右键中止或ESC键取消</p>
                </div>
            </div>

            <!-- Offset and snap toolbar -->
            <div class="flex h-[30px] items-center pb-px text-[#777]">
                <span class="ml-[4px] h-5 border-l-2 border-dotted border-[#bbb]"></span>
                <label class="ml-[5px] flex"><select class="h-5 w-[43px] appearance-none bg-[#f4f4f4] pl-[2px]" aria-label="偏移方式" disabled><option>不偏移</option></select><svg class="h-5 w-[13px] opacity-60"><use href="#chevron"/></svg></label>
                <span class="mx-[3px] h-5 w-px bg-[#999]"></span>
                <label for="dx">X=</label>
                <input id="dx" class="ml-1 h-5 w-[44px] bg-[#f6f6f6] pr-[3px] text-right" type="text" value="0" disabled><svg class="mr-1 h-[18px] w-[11px]"><use href="#spin"/></svg>mm
                <label for="dy" class="ml-[6px]">Y=</label>
                <input id="dy" class="ml-1 h-5 w-[44px] bg-[#f6f6f6] pr-[3px] text-right" type="text" value="0" disabled><svg class="mr-1 h-[18px] w-[11px]"><use href="#spin"/></svg>mm
                <span class="mx-[3px] h-5 w-px bg-[#999]"></span>
                <input id="rotate" type="checkbox" class="size-[13px] appearance-none border border-black bg-white">
                <label for="rotate" class="ml-2 text-black">旋转</label>
                <input class="ml-[6px] h-5 w-[52px] bg-[#f6f6f6] pr-[3px] text-right" type="text" value="0.000" aria-label="旋转角度" disabled><svg class="mr-1 h-[18px] w-[11px]"><use href="#spin"/></svg>°
                <span class="ml-1 h-full w-px bg-[#d5d5d5]"></span>
                <span class="ml-[66px] h-5 border-l-2 border-dotted border-[#bbb]"></span>
                <div class="flex items-center pl-[4px] text-black">
                    <button class="flex items-center gap-1 px-[3px]"><svg class="size-4" fill="none"><path d="M0 3h14M4 0v15" stroke="#e0a0a0" stroke-width="3"/><path d="M7 6v8l2-2 2 4 1-1-1-4h3z" fill="#fff" stroke="#9a9aa8"/></svg>正交</button>
                    <button class="ml-1 flex items-center gap-1 px-[3px]"><svg class="size-4" stroke="#4a78c8"><path d="M1 1l14 14M15 1L1 15"/><path d="M6 6h4v4H6z" fill="#2c50a0" stroke="none"/></svg>交点</button>
                    <button class="flex h-[22px] items-center gap-1 border border-[#99cdf7] bg-[#cce6ff] px-[3px]"><svg class="size-4" fill="none" stroke="#2c50a0"><path d="M10 1v12M0 12.500h15" stroke-width="1.500"/></svg>垂点</button>
                    <button class="flex h-[22px] items-center gap-1 border border-l-0 border-[#99cdf7] bg-[#cce6ff] px-[3px]"><svg class="size-4"><path d="M1 8h14" stroke="#4a78c8"/><path d="M5 5h6v6H5z" fill="#2c50a0"/></svg>中点</button>
                    <button class="flex items-center gap-1 px-[3px]"><svg class="size-4" fill="none" stroke="#5b8ad0"><path d="M8 1.500l6 5-2 8H4l-2-8z"/><path d="M7 0h2v3H7zM1 5h2v3H1zM13 5h2v3h-2z"/></svg>顶点</button>
                    <button class="flex items-center gap-1 px-[3px]"><svg class="size-4" fill="none" stroke="#6d86b0"><path d="M2.500 4v10.500H15M2 12l5-5 4 5 3-8"/><path d="M3 0l2 3M5 0L3 3M12 0l3 3M15 0l-3 3"/></svg>坐标</button>
                </div>
                <span class="ml-1 h-full w-px bg-[#d5d5d5]"></span>
            </div>
        </section>
    </main>

    <!-- Status bar -->
    <footer class="flex h-[22px] items-center border-t border-[#d5d5d5] font-['Liberation_Serif','Noto_Sans_CJK_SC',serif] [&>span]:border-l [&>span]:border-[#d5d5d5] [&>span]:pl-px">
        <p class="w-[149px]">X=2930 Y=2377</p>
        <span class="w-[80px]">层高:3m</span>
        <span class="w-[130px]">建筑底标高:0m</span>
        <span class="w-[50px]">8</span>
        <span class="w-[251px]">&nbsp;</span>
        <span class="flex-1">按鼠标左键选择图元，或拉框选择，按右键中止或ESC键取消</span>
        <span class="w-[70px]">169.8FPS</span>
        <span class="w-[151px]">&nbsp;</span>
    </footer>
    <!-- Taskbar edge -->
    <div class="flex h-[8px] items-end justify-between bg-[#2676cc]">
        <svg class="h-[8px] w-[240px]"><path d="M187 0h36v8h-36z" fill="#4a94e0"/><path d="M20 8l6-2v2z" fill="#fff"/><path d="M96 8l3-2 3 2z" fill="#f0c040"/><path d="M126 8q5-3 10 0z" fill="#1a4f9c"/><path d="M160 6h16v2h-16z" fill="#d8d8d8"/><path d="M199 8q6-4 12 0z" fill="#3cc070"/></svg>
        <svg class="h-[8px] w-[130px]"><path d="M8 8q6-2 12 0z"/><path d="M89 7h16v1H89z" fill="#fff"/><path d="M125 0h1v8h-1z" fill="#7fb0e4"/></svg>
    </div>

    <!-- Floating ball -->
    <button class="absolute top-[553px] -right-[29px] flex size-12 items-center pl-[5px] text-[13px] font-bold text-white">
        <svg class="absolute inset-0 size-12"><circle cx="24" cy="24" r="22" fill="url(#ball)" stroke="#e8ffe8" stroke-width="2"/></svg>
        <span class="relative">52</span>
    </button>

    <!-- Quantity dialog -->
    <div role="dialog" aria-label="查看构件图元工程量" class="absolute top-0 right-[104px] flex h-[504px] w-[734px] flex-col border border-t-0 border-[#5f9fdc] bg-[#f0f0f0] shadow-lg">
        <div class="flex h-[31px] shrink-0 items-center gap-[6px] bg-[#75b9ff] pl-2">
            <svg class="size-[15px]"><use href="#logo"/></svg>
            <h1>查看构件图元工程量</h1>
            <div class="ml-auto flex gap-[35px] pr-[17px]">
                <button aria-label="最小化"><svg class="size-[11px]" stroke="#000"><path d="M0 5.500h10"/></svg></button>
                <button aria-label="最大化"><svg class="size-[11px]" fill="none" stroke="#000"><path d="M.5.500h10v10H.5z"/></svg></button>
                <button aria-label="关闭"><svg class="size-[11px]"><use href="#cross"/></svg></button>
            </div>
        </div>
        <div class="flex h-[22px] shrink-0 items-end pl-[3px]">
            <button class="h-[19px] w-[70px] border border-b-0 border-[#d9d9d9]">构件工程量</button>
            <button class="h-[21px] w-[75px] border border-b-0 border-[#d9d9d9] bg-white">做法工程量</button>
        </div>
        <div class="min-h-0 flex-1 border-t border-[#d9d9d9] bg-white px-[4px] pt-[2px] pb-[3px]">
            <div class="h-full border border-[#a0a0a0] pl-px">
                <table class="w-[218px] table-fixed border-collapse whitespace-nowrap text-center font-['Liberation_Serif','Noto_Sans_CJK_SC',serif] [&_td]:border [&_td]:border-[#000080] [&_td]:p-0 [&_th]:border [&_th]:border-[#c8d8ec] [&_th]:bg-[#7a9fd0] [&_th]:p-0 [&_th]:font-normal [&_tr]:h-[19px]">
                    <tr class="text-white"><th class="w-[35px]"></th><th class="w-[59px] text-[#b040b0]">编码</th><th class="w-[53px]">项目名称</th><th class="w-[29px]">单位</th><th>工程量</th></tr>
                    <tr><th class="text-[#7040c0]">1</th><td class="bg-[#dce9f8]">010302001</td><td class="pl-px! text-left">100面积</td><td>m2</td><td class="pl-px! text-left">34.8</td></tr>
                    <tr><th>2</th><td>010302001</td><td class="pl-px! text-left">100体积</td><td>m3</td><td class="pl-px! text-left">3.48</td></tr>
                    <tr><th>3</th><td>010302001</td><td class="pl-px! text-left">200面积</td><td>m2</td><td class="pl-px! text-left">33.6</td></tr>
                    <tr><th>4</th><td>010302001</td><td class="pl-px! text-left">200体积</td><td>m3</td><td class="pl-px! text-left">6.72</td></tr>
                </table>
            </div>
        </div>
        <div class="flex h-[42px] shrink-0 items-start border-t border-[#a0a0a0] px-[5px] pt-[8px] pr-[10px]">
            <button class="h-[22px] w-[128px] border border-[#adadad] bg-[#e1e1e1]">显示构件明细(<u>D</u>)</button>
            <button class="ml-[21px] h-[22px] w-[82px] border border-[#adadad] bg-[#e1e1e1]">导出到<u>E</u>xcel</button>
            <button class="ml-[18px] h-[22px] w-[103px] border border-[#adadad] bg-[#e1e1e1]">导出到已有E<u>x</u>cel</button>
            <button class="ml-auto h-[22px] w-[72px] border-2 border-[#0078d7] bg-[#e1e1e1]">退出</button>
        </div>
    </div>
</div>
</body>
</html>
